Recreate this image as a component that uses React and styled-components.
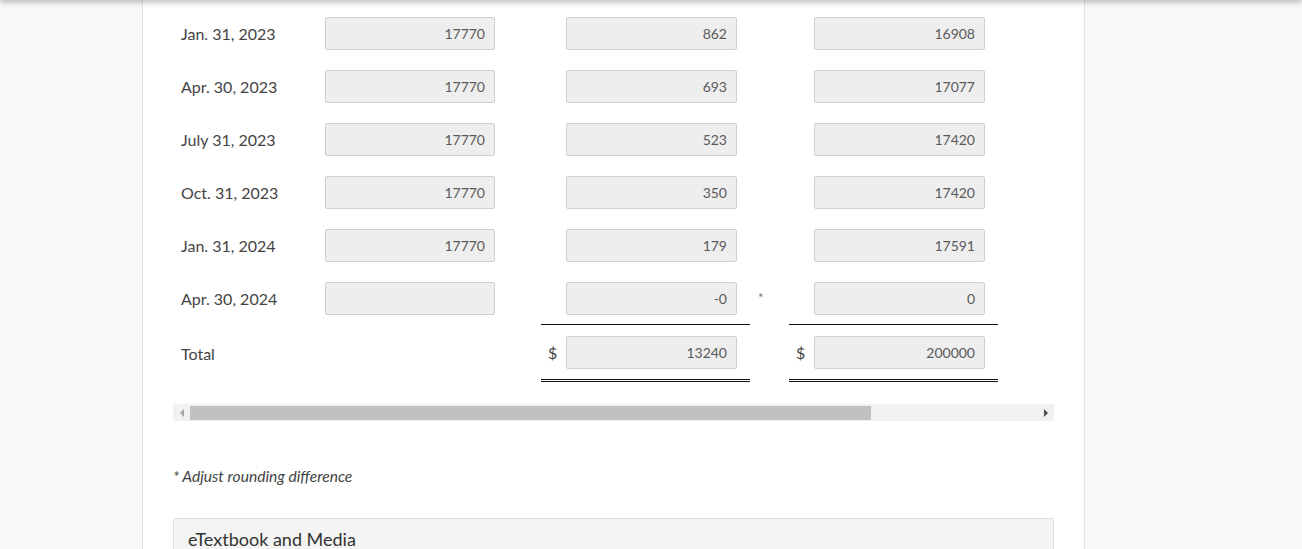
import React from 'react';
import styled, {createGlobalStyle} from 'styled-components';

const GlobalStyle = createGlobalStyle`
  html, body {
    margin: 0;
    padding: 0;
    background: #f9f9f9;
    font-family: Lato, "Liberation Sans", sans-serif;
    color: #333;
  }
`;

const TopShadow = styled.div`
  position: fixed;
  top: -10px;
  left: 0;
  right: 0;
  height: 10px;
  box-shadow: 0 2px 6px rgba(0, 0, 0, 0.28);
  z-index: 5;
`;

const Panel = styled.div`
  margin-left: 142px;
  width: 943px;
  box-sizing: border-box;
  min-height: 100vh;
  background: #fff;
  border-left: 1px solid #e2e2e2;
  border-right: 1px solid #e2e2e2;
  padding: 7px 30px 0 30px;
`;

const TableScroller = styled.div`
  overflow: hidden;
`;

const Grid = styled.div`
  display: grid;
  grid-template-columns: 152px 170px 46px 209px 39px 209px;
`;

const LabelCell = styled.div`
  display: flex;
  align-items: center;
  padding-left: 8px;
  font-size: 16px;
  color: #444;
  height: ${(p) => (p.$total ? 56 : 53)}px;
  box-sizing: border-box;
`;

const PlainCell = styled.div`
  display: flex;
  align-items: center;
  height: 53px;
`;

const MarkCell = styled.div`
  font-size: 13px;
  color: #777;
  padding: 18px 0 0 8px;
`;

const AmountCell = styled.div`
  display: flex;
  align-items: center;
  box-sizing: border-box;
  padding: 0 13px 0 7px;
  height: 53px;
  ${(p) => p.$underline && `border-bottom: 1px solid #111;`}
  ${(p) => p.$total && `height: 57px; border-bottom: 3px double #111; padding-top: 1px;`}
`;

const Dollar = styled.span`
  width: 18px;
  font-size: 16px;
  color: #444;
`;

const Field = styled.div`
  box-sizing: border-box;
  height: 33px;
  width: ${(p) => p.$w || 171}px;
  margin-left: ${(p) => (p.$indent ? 18 : 0)}px;
  background: #eeeeee;
  border: 1px solid #cfcfcf;
  border-radius: 2px;
  display: flex;
  align-items: center;
  justify-content: flex-end;
  padding-right: 9px;
  font-size: 14px;
  color: #5a5a5a;
`;

const Scrollbar = styled.div`
  margin-top: 22px;
  height: 17px;
  background: #f1f1f1;
  display: flex;
  align-items: center;
`;

const Arrow = styled.div`
  width: 17px;
  display: flex;
  justify-content: center;
  &::before {
    content: '';
    border-top: 4px solid transparent;
    border-bottom: 4px solid transparent;
    ${(p) => (p.$dir === 'left' ? `border-right: 4px solid #a3a3a3;` : `border-left: 4px solid #505050;`)}
  }
`;

const Track = styled.div`
  flex: 1;
  height: 100%;
  display: flex;
  align-items: center;
`;

const Thumb = styled.div`
  width: 681px;
  height: 14px;
  background: #c1c1c1;
`;

const Note = styled.p`
  margin: 46px 0 0;
  font-size: 15.6px;
  font-style: italic;
  color: #444;
  line-height: 18px;
`;

const MediaBox = styled.div`
  margin-top: 33px;
  background: #f4f4f4;
  border: 1px solid #dcdcdc;
  border-radius: 3px;
  padding: 9px 14px 20px;
  font-size: 18px;
  color: #333;
`;

const rows = [
    {date: 'Jan. 31, 2023', a: '17770', b: '862', c: '16908'},
    {date: 'Apr. 30, 2023', a: '17770', b: '693', c: '17077'},
    {date: 'July 31, 2023', a: '17770', b: '523', c: '17420'},
    {date: 'Oct. 31, 2023', a: '17770', b: '350', c: '17420'},
    {date: 'Jan. 31, 2024', a: '17770', b: '179', c: '17591'},
    {date: 'Apr. 30, 2024', a: '', b: '-0', c: '0', mark: true, last: true},
];

const App = () => {
    return (
        <>
            <GlobalStyle/>
            <TopShadow/>
            <Panel>
                <TableScroller>
                    <Grid>
                        {rows.map((row) => (
                            <React.Fragment key={row.date}>
                                <LabelCell>{row.date}</LabelCell>
                                <PlainCell>
                                    <Field $w={170}>{row.a}</Field>
                                </PlainCell>
                                <div/>
                                <AmountCell $underline={row.last}>
                                    <Field $indent>{row.b}</Field>
                                </AmountCell>
                                <MarkCell>{row.mark ? '*' : ''}</MarkCell>
                                <AmountCell $underline={row.last}>
                                    <Field $indent>{row.c}</Field>
                                </AmountCell>
                            </React.Fragment>
                        ))}
                        <LabelCell $total>Total</LabelCell>
                        <div/>
                        <div/>
                        <AmountCell $total>
                            <Dollar>$</Dollar>
                            <Field>13240</Field>
                        </AmountCell>
                        <div/>
                        <AmountCell $total>
                            <Dollar>$</Dollar>
                            <Field>200000</Field>
                        </AmountCell>
                    </Grid>
                </TableScroller>
                <Scrollbar>
                    <Arrow $dir="left"/>
                    <Track>
                        <Thumb/>
                    </Track>
                    <Arrow $dir="right"/>
                </Scrollbar>
                <Note>* Adjust rounding difference</Note>
                <MediaBox>eTextbook and Media</MediaBox>
            </Panel>
        </>
    );
};

export default App;
